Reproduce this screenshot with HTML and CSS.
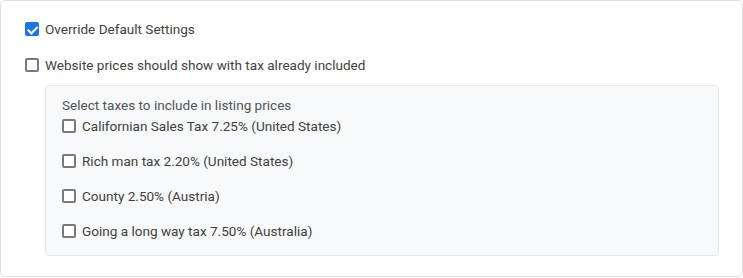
FILE: index.html
```html
<!DOCTYPE html>
<html lang="en">
<head>
<meta charset="utf-8">
<title>Tax settings</title>
<link rel="stylesheet" href="styles.css">
</head>
<body>
<div class="card">
  <label class="check-row">
    <input type="checkbox" checked>
    <span>Override Default Settings</span>
  </label>
  <label class="check-row second">
    <input type="checkbox">
    <span>Website prices should show with tax already included</span>
  </label>
  <div class="tax-box">
    <div class="tax-title">Select taxes to include in listing prices</div>
    <div class="tax-list">
      <label class="check-row"><input type="checkbox"><span>Californian Sales Tax 7.25% (United States)</span></label>
      <label class="check-row"><input type="checkbox"><span>Rich man tax 2.20% (United States)</span></label>
      <label class="check-row"><input type="checkbox"><span>County 2.50% (Austria)</span></label>
      <label class="check-row"><input type="checkbox"><span>Going a long way tax 7.50% (Australia)</span></label>
    </div>
  </div>
</div>
</body>
</html>
```

FILE: styles.css
```css
html, body {
  margin: 0;
  padding: 0;
  background: #ffffff;
}
body {
  font-family: Roboto, "Liberation Sans", Arial, sans-serif;
  font-size: 13.55px;
  color: #3f3f44;
}
.card {
  box-sizing: border-box;
  width: 743px;
  height: 277px;
  border: 1px solid #e0e0e0;
  border-radius: 5px;
  padding: 18px 23px 0 24px;
  display: flex;
  flex-direction: column;
}
.check-row {
  display: flex;
  align-items: center;
  gap: 6px;
  height: 20px;
  line-height: 20px;
}
.check-row input {
  appearance: none;
  -webkit-appearance: none;
  box-sizing: border-box;
  margin: 0;
  width: 14px;
  height: 14px;
  flex: none;
  border: 2px solid #7a7982;
  border-radius: 2px;
  background: #ffffff;
  position: relative;
}
.check-row input:checked {
  background: #1b76e3;
  border-color: #1b76e3;
}
.check-row input:checked::after {
  content: "";
  position: absolute;
  left: 2.5px;
  top: -0.5px;
  width: 3.5px;
  height: 7.5px;
  border: solid #ffffff;
  border-width: 0 2px 2px 0;
  transform: rotate(45deg);
}
.check-row.second {
  margin-top: 16px;
}
.tax-box {
  margin: 10px 0 0 20px;
  background: #f8f9fa;
  border: 1px solid #e6e7e9;
  border-radius: 4px;
  padding: 9px 16px 14px 16px;
}
.tax-title {
  line-height: 20px;
  height: 20px;
  color: #505459;
}
.tax-list {
  display: flex;
  flex-direction: column;
  gap: 15px;
  margin-top: 1px;
}
```
